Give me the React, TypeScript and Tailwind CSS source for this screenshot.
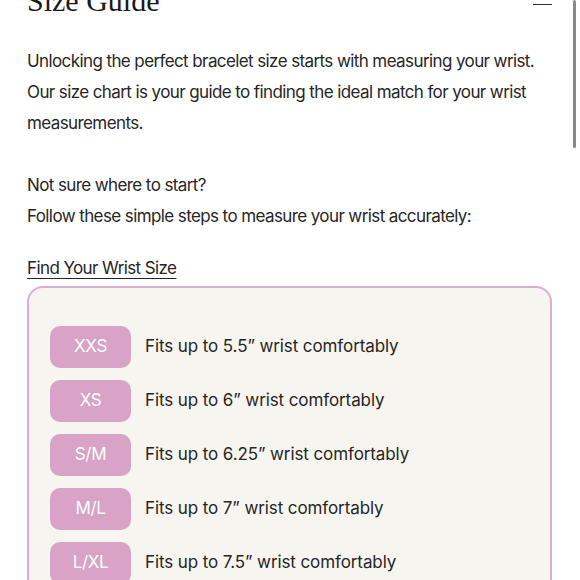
import React from "react";

const sizes = [
  { s: "XXS", t: "Fits up to 5.5” wrist comfortably" },
  { s: "XS", t: "Fits up to 6” wrist comfortably" },
  { s: "S/M", t: "Fits up to 6.25” wrist comfortably" },
  { s: "M/L", t: "Fits up to 7” wrist comfortably" },
  { s: "L/XL", t: "Fits up to 7.5” wrist comfortably" },
];

export default function App() {
  return (
    <div className="relative w-[580px] h-[580px] overflow-hidden bg-white text-[#262626]" style={{ fontFamily: "Inter, 'Noto Sans', sans-serif" }}>
      <div className="absolute right-[4px] top-0 w-[3px] h-[148px] bg-[#8a8a8a] rounded-full" />
      <div className="pl-[27px] pr-[28px]">
        <div className="flex items-end justify-between h-[12px]">
          <div className="text-[30px] leading-none text-[#1a1a1a] translate-y-[4px]" style={{ fontFamily: "'Liberation Serif', serif" }}>Size Guide</div>
          <div className="w-[19px] h-[1.5px] bg-[#333] mb-[7px]" />
        </div>
        <div className="mt-[34px] text-[17px] leading-[31px] tracking-[-0.6px]">
          <p className="whitespace-nowrap">Unlocking the perfect bracelet size starts with measuring your wrist.<br />Our size chart is your guide to finding the ideal match for your wrist<br />measurements.</p>
          <p className="mt-[31px]">Not sure where to start?</p>
          <p>Follow these simple steps to measure your wrist accurately:</p>
          <p className="mt-[21px] underline underline-offset-[4px]">Find Your Wrist Size</p>
        </div>
        <div className="mt-[2px] border-2 border-[#d9aed0] rounded-[16px] bg-[#f7f5f0] pl-[21px] pt-[38px] pb-[20px] flex flex-col gap-[12px]">
          {sizes.map((r) => (
            <div key={r.s} className="flex items-center gap-[14px]">
              <div className="w-[81px] h-[42px] rounded-[10px] bg-[#d9a2c7] text-white flex items-center justify-center text-[17px] tracking-[-0.3px]">{r.s}</div>
              <div className="text-[17px] tracking-[-0.1px]">{r.t}</div>
            </div>
          ))}
        </div>
      </div>
    </div>
  );
}
